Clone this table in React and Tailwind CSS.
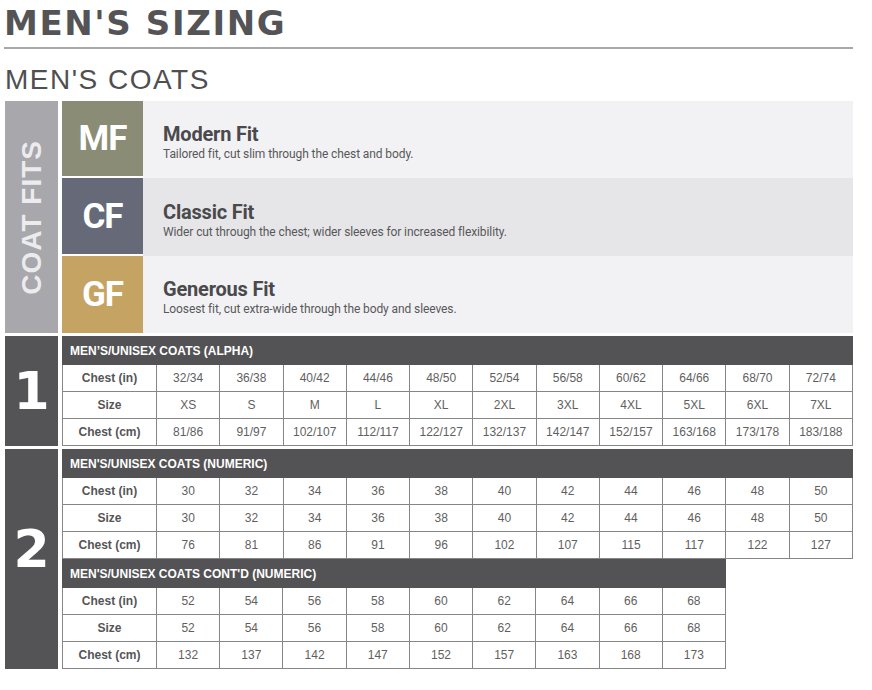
import React from 'react'

const fits = [
  { code: 'MF', name: 'Modern Fit', desc: 'Tailored fit, cut slim through the chest and body.', badge: 'bg-[#8b8c76]', row: 'bg-[#f2f2f4] h-[77px]' },
  { code: 'CF', name: 'Classic Fit', desc: 'Wider cut through the chest; wider sleeves for increased flexibility.', badge: 'bg-[#666977]', row: 'bg-[#e6e6e8] h-[78px]' },
  { code: 'GF', name: 'Generous Fit', desc: 'Loosest fit, cut extra-wide through the body and sleeves.', badge: 'bg-[#c5a362]', row: 'bg-[#f2f2f4] h-[77px]' },
]

const alpha = [
  { label: 'Chest (in)', values: ['32/34', '36/38', '40/42', '44/46', '48/50', '52/54', '56/58', '60/62', '64/66', '68/70', '72/74'] },
  { label: 'Size', values: ['XS', 'S', 'M', 'L', 'XL', '2XL', '3XL', '4XL', '5XL', '6XL', '7XL'] },
  { label: 'Chest (cm)', values: ['81/86', '91/97', '102/107', '112/117', '122/127', '132/137', '142/147', '152/157', '163/168', '173/178', '183/188'] },
]

const numeric = [
  { label: 'Chest (in)', values: ['30', '32', '34', '36', '38', '40', '42', '44', '46', '48', '50'] },
  { label: 'Size', values: ['30', '32', '34', '36', '38', '40', '42', '44', '46', '48', '50'] },
  { label: 'Chest (cm)', values: ['76', '81', '86', '91', '96', '102', '107', '115', '117', '122', '127'] },
]

const numericCont = [
  { label: 'Chest (in)', values: ['52', '54', '56', '58', '60', '62', '64', '66', '68'] },
  { label: 'Size', values: ['52', '54', '56', '58', '60', '62', '64', '66', '68'] },
  { label: 'Chest (cm)', values: ['132', '137', '142', '147', '152', '157', '163', '168', '173'] },
]

function SizeTable({ title, rows, className }) {
  const n = rows[0].values.length
  return (
    <table className={`table-fixed border-collapse ${className}`}>
      <colgroup>
        <col className="w-[94px]" />
        {rows[0].values.map((_, i) => <col key={i} />)}
      </colgroup>
      <thead>
        <tr className="h-[28px]">
          <th colSpan={n + 1} className="bg-[#535355] border border-[#535355] pl-[7px] text-left text-[12px] font-bold text-white leading-none">
            {title}
          </th>
        </tr>
      </thead>
      <tbody>
        {rows.map((r) => (
          <tr key={r.label} className="h-[27px]">
            <td className="border border-[#868686] text-center text-[12px] font-bold text-[#555557] leading-none">{r.label}</td>
            {r.values.map((v, i) => (
              <td key={i} className="border border-[#868686] text-center text-[12px] text-[#5f5f61] leading-none">{v}</td>
            ))}
          </tr>
        ))}
      </tbody>
    </table>
  )
}

export default function App() {
  return (
    <div className="w-[872px] h-[690px] bg-white font-['Liberation_Sans',sans-serif] overflow-hidden">
      <div className="ml-[4px] w-[849px]">
        {/* Title */}
        <h1 className="pt-[6px] font-['DejaVu_Sans',sans-serif] text-[34px] leading-[34px] font-bold tracking-[1.6px] text-[#545456]">
          MEN'S SIZING
        </h1>
        <div className="mt-[7px] h-[2px] bg-[#a9a9a9]" />
        <h2 className="mt-[17px] pl-[1px] text-[28px] leading-[28px] tracking-[1.5px] text-[#4f4f51]">MEN'S COATS</h2>

        {/* Coat fits */}
        <div className="mt-[7px] ml-[1px] flex h-[232px]">
          <div className="w-[53px] bg-[#a7a7ac] flex items-center justify-center">
            <span className="[writing-mode:vertical-rl] rotate-180 text-[28px] leading-none font-bold tracking-[1px] text-[#ececee]">
              COAT FITS
            </span>
          </div>
          <div className="ml-[4px] flex-1 flex flex-col">
            {fits.map((f, i) => (
              <div key={f.code} className={`flex ${f.row}`}>
                <div className={`w-[81px] bg-white ${i < 2 ? 'pb-[2px]' : ''}`}>
                  <div className={`h-full flex items-center justify-center ${f.badge} font-['Roboto',sans-serif] text-[35px] leading-none font-bold tracking-[-1px] text-white`}>
                    {f.code}
                  </div>
                </div>
                <div className="flex-1 flex flex-col justify-center pl-[20px] pt-[6px] font-['Roboto',sans-serif]">
                  <div className="text-[20px] leading-[20px] font-bold text-[#4a4a4c] tracking-[-0.2px]">{f.name}</div>
                  <div className="mt-[3px] text-[12px] leading-[14px] text-[#58585a] tracking-[-0.1px]">{f.desc}</div>
                </div>
              </div>
            ))}
          </div>
        </div>

        {/* Section 1 */}
        <div className="mt-[3px] ml-[1px] flex">
          <div className="w-[53px] bg-[#545456] flex items-center justify-center">
            <span className="font-['DejaVu_Sans',sans-serif] text-[52px] leading-none font-bold text-white">1</span>
          </div>
          <div className="ml-[4px] flex-1">
            <SizeTable title="MEN’S/UNISEX COATS (ALPHA)" rows={alpha} className="w-full" />
          </div>
        </div>

        {/* Section 2 */}
        <div className="mt-[3px] ml-[1px] flex">
          <div className="w-[53px] bg-[#545456] flex items-center justify-center pb-[20px]">
            <span className="font-['DejaVu_Sans',sans-serif] text-[52px] leading-none font-bold text-white">2</span>
          </div>
          <div className="ml-[4px] flex-1 flex flex-col">
            <SizeTable title="MEN'S/UNISEX COATS (NUMERIC)" rows={numeric} className="w-full" />
            <SizeTable title="MEN'S/UNISEX COATS CONT'D (NUMERIC)" rows={numericCont} className="w-[664px]" />
          </div>
        </div>
      </div>
    </div>
  )
}
